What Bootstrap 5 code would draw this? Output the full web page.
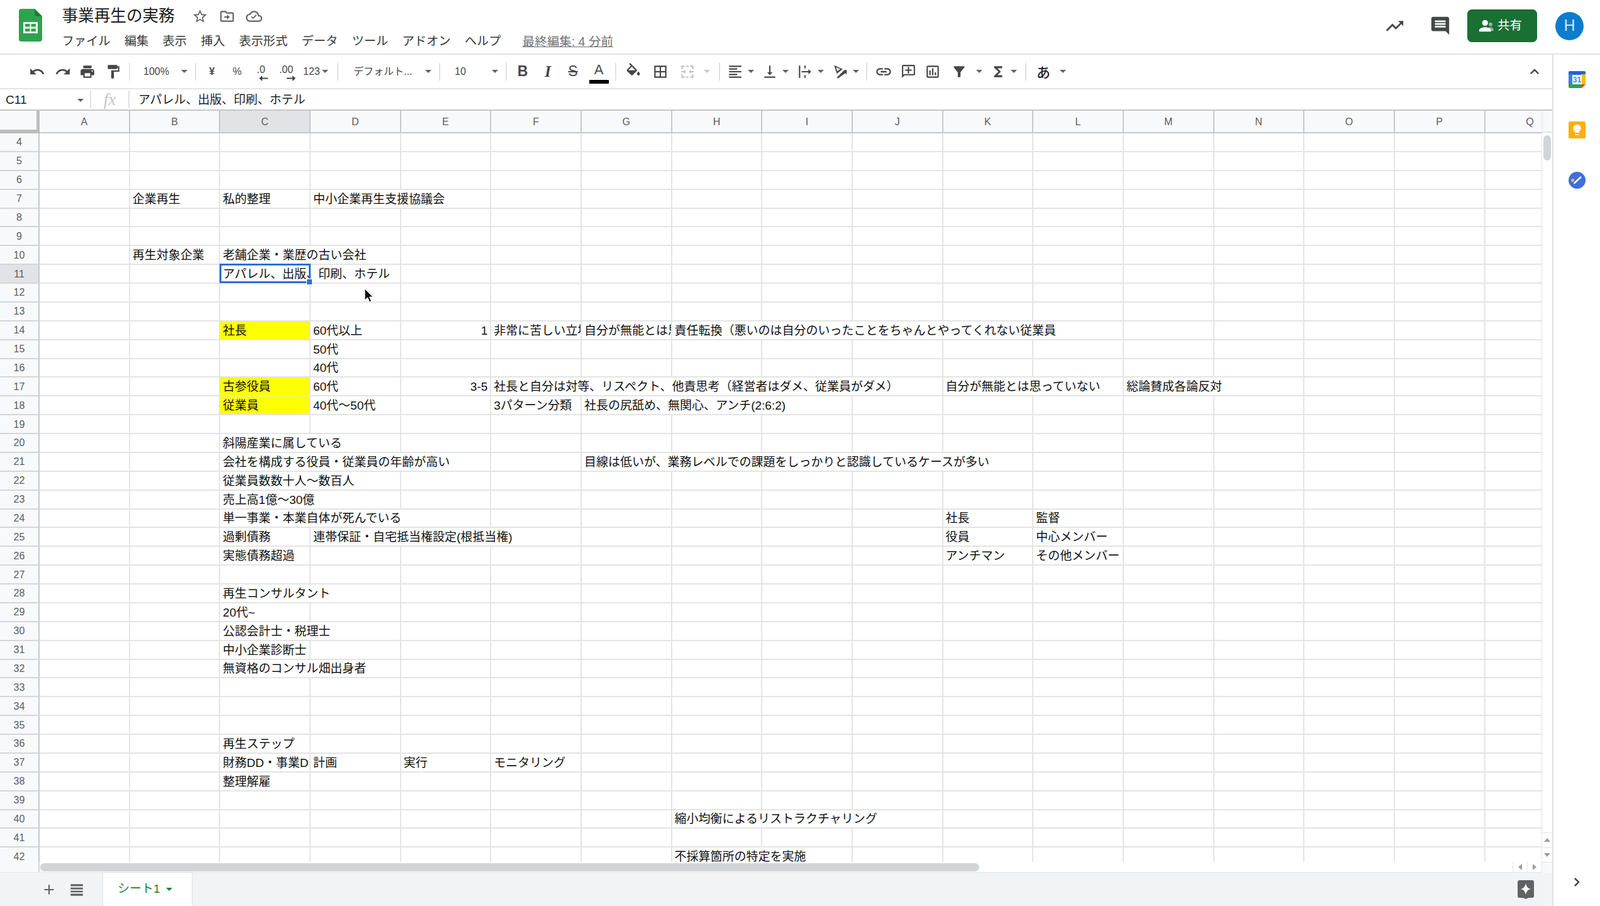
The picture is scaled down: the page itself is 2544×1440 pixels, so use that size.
<!DOCTYPE html>
<html lang="ja">
<head>
<meta charset="utf-8">
<title>事業再生の実務</title>
<link href="https://cdn.jsdelivr.net/npm/bootstrap@5.3.0/dist/css/bootstrap.min.css" rel="stylesheet">
<style>
html,body{height:100%}
body{font-family:"Liberation Sans","Noto Sans CJK JP",sans-serif;background:#fff;color:#000;position:relative;overflow:hidden}
.ic{fill:#444746;display:block;flex:none}
.ic-g{fill:#5f6368}
.ic-off{fill:#bfc1c4}
.carr{width:0;height:0;border-left:5px solid transparent;border-right:5px solid transparent;border-top:5.5px solid #5f6368;flex:none}
.carr-off{border-top-color:#c4c6c8}
/* header */
.appbar{height:87px;border-bottom:2px solid #e2e3e4;flex:none}
.logo-box{padding:14px 31.5px 0 30px;align-self:flex-start}
.doc-col{padding-top:3px}
.doc-title{font-size:25.6px;line-height:30px;color:#1b1b1b;margin:0;font-weight:400}
.doc-icons{gap:17px;margin-left:27.5px;padding-top:3px}
.menu-row{font-size:19.3px;line-height:26px;color:#36383b;gap:22.2px;margin-top:13px}
.last-edit{color:#6d7175;text-decoration:underline;margin-left:12px;font-size:19.5px}
.right-tools{padding-right:26px;margin-top:-3px}
.trend-slot{margin-right:39px}
.cmt-slot{margin-right:26.5px}
.sharebtn{--bs-btn-bg:#1a6f32;--bs-btn-border-color:#1a6f32;--bs-btn-color:#fff;--bs-btn-hover-bg:#1a6f32;--bs-btn-hover-color:#fff;width:111px;height:52px;border-radius:7px;padding:0 0 0 15px;font-size:19.5px;gap:4px}
.avatar{width:45px;height:45px;background:#0c7ccf;color:#cfe6f8;font-size:25px;margin-left:29px}
/* toolbar */
.tbgrid{display:grid;grid-template-columns:42px 40px 38px 44px 8px 97px 8px 44px 36px 40px 40px 58px 8px 154px 8px 94px 16px 36px 44px 36px 46px 8px 48px 38px 48px 14px 25px 55px 56px 56px 51px 8px 46px 32px 46px 38px 26px 34px 16px 22px 34px 28px 1fr;padding:0 14px 0 38px;height:55px;align-items:center;justify-items:center;border-bottom:2px solid #e2e3e4;flex:none;font-size:16px;color:#444746}
.tb-sep{width:2px;height:28px;background:#dfe1e3}
.tsel{justify-self:stretch;display:flex;align-items:center;justify-content:space-between}
.ts-zoom{padding:0 9px 0 18px}
.ts-font{padding:0 9px 0 21px}
.ts-size{padding:0 5px 0 20px}
.ts-num{padding-left:7px;justify-content:flex-start;gap:3px}
.pair{justify-self:stretch;display:flex;align-items:center;gap:7px}
.dec{display:flex;flex-direction:column;align-items:flex-end;line-height:18px;padding-top:3px}
.dec-a{margin-right:-4px}
.fmt-b{font-weight:700;font-size:23px}
.fmt-i{font-family:"Liberation Serif",serif;font-style:italic;font-size:26px;font-weight:700}
.fmt-s{font-size:23px;text-decoration:line-through}
.fmt-a{display:flex;flex-direction:column;align-items:center;font-size:22px;line-height:26px;padding-top:3px}
.fmt-bar{width:31px;height:6px;background:#000;margin-top:3px}
.kana{font-size:22px;color:#222;font-weight:500;font-family:"Noto Sans CJK JP",sans-serif}
.collapse-btn{justify-self:end}
.yen{font-weight:700}
/* formula */
.fbar{height:34px;border-bottom:2px solid #c5c6c8;flex:none;font-size:19px;color:#202124}
.namebox{width:143px;padding:2px 10px 0 9px}
.fb-sep{width:2px;height:28px;background:#e0e1e3;flex:none}
.fx-slot{width:59px;text-align:center;font-family:"Liberation Serif",serif;font-style:italic;font-size:27px;color:#c4c5c7;line-height:30px}
.fb-text{padding:2px 0 0 14px}
/* sheet table */
.gridarea{min-height:0}
.tablewrap{overflow:hidden;min-height:0}
.sheet-table.table{table-layout:fixed;width:2505.39px;border-collapse:separate;border-spacing:0;margin:0;font-size:19px;color:#111}
.sheet-table.table>:not(caption)>*>*{padding:2px 4px 0;border:0;box-shadow:none;height:29.88px;line-height:24px;white-space:nowrap;vertical-align:middle;border-right:2px solid #e3e4e4;border-bottom:2px solid #e3e4e4;background:#fff}
.sheet-table.table>thead>tr>th{height:36px;background:#f8f9fa;border-right:2px solid #c6c8ca;border-bottom:2px solid #c6c8ca;font-weight:400;font-size:16px;color:#5a5d61;text-align:center;padding:2px 0 0}
.sheet-table.table>thead>tr>th.corner{border-right:5px solid #bcbdbe;border-bottom:6px solid #bcbdbe}
.sheet-table.table>thead>tr>th.cur,.sheet-table.table>tbody>tr>th.cur{background:#e1e3e6}
.sheet-table.table>tbody>tr>th{background:#f8f9fa;border-right:2px solid #c6c8ca;border-bottom:2px solid #d4d6d8;font-weight:400;font-size:16px;color:#5a5d61;text-align:center;padding:1px 0 0}
.sheet-table.table>tbody>tr>td.cell-y{background:#ff0}
.sheet-table.table>tbody>tr>td.cell-c{overflow:hidden}
.sheet-table.table>tbody>tr>td.cell-r{text-align:right}
.sheet-table.table>tbody>tr>td.cell-s{position:relative}
.selbox{position:absolute;left:-1px;top:-2px;width:144.5px;height:31px;border:3px solid #2a6fd8;pointer-events:none}
.selhandle{position:absolute;right:-6px;bottom:-6px;width:10px;height:10px;background:#2a6fd8;border:1px solid #fff}
.col-rh{width:63px}
.col-c{width:143.67px}
/* scrollbars */
.hscroll{height:17px;flex:none;background:#fff;border-bottom:1px solid #e6e7e8}
.hs-head{width:63px;background:#f8f9fa;border-right:2px solid #d4d6d8;flex:none}
.hs-track{padding:2px 0 2px 1px;min-width:0}
.hs-thumb{width:1493px;height:13px;border-radius:7px;background:#d2d5d8}
.sb-btn{width:23px;border-left:1px solid #e2e3e4;flex:none}
.vscroll{width:17px;flex:none;background:#fff;border-left:1px solid #e3e4e4}
.vs-head{height:35px;background:#f8f9fa;border-bottom:2px solid #e3e4e4;flex:none}
.vs-track{padding:4px 2px 0 2px;min-height:0}
.vs-thumb{height:40px;border-radius:7px;background:#d2d5d8}
.vs-btn{height:23.5px;border-top:1px solid #e2e3e4;flex:none}
.vs-corner{height:17px;border-top:1px solid #e2e3e4;background:#f8f9fa;flex:none}
.tri{width:0;height:0;border:5px solid transparent}
.tri-u{border-bottom:6px solid #9a9ca0;border-top:0}
.tri-d{border-top:6px solid #9a9ca0;border-bottom:0}
.tri-l{border-right:6px solid #9a9ca0;border-left:0}
.tri-r{border-left:6px solid #9a9ca0;border-right:0}
/* footer */
.sheetbar{height:53px;background:#f1f3f4;flex:none;padding-left:65px;padding-right:29px}
.ham-slot{margin-left:18px;margin-right:29px}
.sheettab{width:141px;height:100%;background:#fff;color:#188038;font-size:19px;padding-left:23px;gap:9px;box-shadow:0 0 2px rgba(60,64,67,.25)}
.carr-green{border-top-color:#188038}
/* side */
.sidepanel{width:76px;flex:none;border-left:2px solid #e2e3e4;padding:26px 0 24px;gap:53px}
.cursorpin{position:absolute;left:579px;top:458px}
</style>
</head>
<body class="d-flex flex-column">

<header class="appbar d-flex align-items-center">
  <div class="logo-box">
    <svg width="37" height="52" viewBox="0 0 37 52"><path d="M4 0h21l12 12v36a4 4 0 0 1-4 4H4a4 4 0 0 1-4-4V4a4 4 0 0 1 4-4z" fill="#2fa24f"/><path d="M25 0l12 12H28a3 3 0 0 1-3-3z" fill="#188038"/><path d="M7 21h23v18H7z" fill="#f1f8f3"/><path d="M10 24h7.5v4.5H10zM19.5 24H27v4.5h-7.5zM10 31.5h7.5V36H10zM19.5 31.5H27V36h-7.5z" fill="#2fa24f"/></svg>
  </div>
  <div class="doc-col">
    <div class="d-flex align-items-center">
      <h1 class="doc-title">事業再生の実務</h1>
      <div class="doc-icons d-flex align-items-center">
        <svg class="ic ic-g" width="26" height="26" viewBox="0 0 24 24"><path d="M22 9.24l-7.19-.62L12 2 9.19 8.63 2 9.24l5.46 4.73L5.82 21 12 17.27 18.18 21l-1.63-7.03L22 9.24zM12 15.4l-3.76 2.27 1-4.28-3.32-2.88 4.38-.38L12 6.1l1.71 4.04 4.38.38-3.32 2.88 1 4.28L12 15.4z"/></svg>
        <svg class="ic ic-g" width="26" height="26" viewBox="0 0 24 24"><path d="M20 6h-8l-2-2H4c-1.1 0-2 .9-2 2v12c0 1.1.9 2 2 2h16c1.1 0 2-.9 2-2V8c0-1.1-.9-2-2-2zm0 12H4V6h5.17l2 2H20v10z"/><path d="M12 9.5l4 3.5-4 3.500V14H8v-2h4z"/></svg>
        <svg class="ic ic-g" width="26" height="26" viewBox="0 0 24 24"><path d="M19.35 10.04C18.67 6.59 15.64 4 12 4 9.11 4 6.6 5.64 5.35 8.04 2.34 8.36 0 10.91 0 14c0 3.31 2.69 6 6 6h13c2.76 0 5-2.24 5-5 0-2.64-2.05-4.78-4.65-4.96zM19 18H6c-2.21 0-4-1.790-4-4s1.790-4 4-4h.71C7.37 7.690 9.480 6 12 6c3.040 0 5.500 2.460 5.500 5.500v.5H19c1.660 0 3 1.340 3 3s-1.340 3-3 3z"/><path d="M10.500 16L7.500 13l1.200-1.200 1.800 1.800 4.300-4.300 1.200 1.200z"/></svg>
      </div>
    </div>
    <nav class="menu-row d-flex align-items-center">
      <span>ファイル</span><span>編集</span><span>表示</span><span>挿入</span><span>表示形式</span><span>データ</span><span>ツール</span><span>アドオン</span><span>ヘルプ</span><span class="last-edit">最終編集: 4 分前</span>
    </nav>
  </div>
  <div class="right-tools ms-auto d-flex align-items-center">
    <div class="trend-slot"><svg class="ic" width="33" height="33" viewBox="0 0 24 24"><path d="M16 6l2.290 2.290-4.880 4.880-4-4L2 16.590 3.410 18l6-6 4 4 6.300-6.290L22 12V6z"/></svg></div>
    <div class="cmt-slot"><svg class="ic" width="34" height="34" viewBox="0 0 24 24"><path d="M21.990 4c0-1.100-.89-2-1.990-2H4c-1.100 0-2 .9-2 2v12c0 1.100.9 2 2 2h14l4 4-.01-18zM18 14H6v-2h12v2zm0-3H6V9h12v2zm0-3H6V6h12v2z"/></svg></div>
    <button class="btn sharebtn d-flex align-items-center" type="button">
      <svg width="28" height="28" viewBox="0 0 24 24"><path d="M18 12.500a2.500 2.500 0 1 0 0-5 2.500 2.500 0 0 0 0 5zm0 1.500c-1.700 0-5 .9-5 2.600V19h9v-2.400c0-1.700-3.300-2.600-4-2.600z" fill="#8fb79a"/><path d="M10.500 12a4 4 0 1 0 0-8 4 4 0 0 0 0 8zm0 2c-2.670 0-8 1.340-8 4v2h16v-2c0-2.660-5.330-4-8-4z" fill="#fff"/></svg>
      <span>共有</span>
    </button>
    <div class="avatar rounded-circle d-flex align-items-center justify-content-center">H</div>
  </div>
</header>

<div class="d-flex flex-grow-1" style="min-height:0">
  <main class="d-flex flex-column flex-grow-1" style="min-width:0">
    <div class="tbgrid">
      <svg class="ic" width="26" height="26" viewBox="0 0 24 24"><path d="M12.500 8c-2.650 0-5.050.99-6.900 2.600L2 7v9h9l-3.620-3.620c1.390-1.160 3.160-1.880 5.120-1.880 3.540 0 6.550 2.310 7.600 5.500l2.370-.78C21.080 11.030 17.150 8 12.500 8z"/></svg>
      <svg class="ic" width="26" height="26" viewBox="0 0 24 24"><path d="M18.400 10.600C16.550 8.990 14.150 8 11.500 8c-4.650 0-8.580 3.030-9.960 7.220L3.900 16c1.050-3.190 4.050-5.500 7.600-5.500 1.950 0 3.730.72 5.120 1.880L13 16h9V7l-3.600 3.600z"/></svg>
      <svg class="ic" width="26" height="26" viewBox="0 0 24 24"><path d="M19 8H5c-1.660 0-3 1.340-3 3v6h4v4h12v-4h4v-6c0-1.660-1.340-3-3-3zm-3 11H8v-5h8v5zm3-7c-.55 0-1-.45-1-1s.45-1 1-1 1 .45 1 1-.45 1-1 1zm-1-9H6v4h12V3z"/></svg>
      <svg class="ic" width="26" height="26" viewBox="0 0 24 24"><path d="M18 4V3c0-.55-.45-1-1-1H5c-.55 0-1 .45-1 1v4c0 .55.45 1 1 1h12c.55 0 1-.45 1-1V6h1v4H9v11c0 .55.45 1 1 1h2c.55 0 1-.45 1-1v-9h8V4h-3z"/></svg>
      <i class="tb-sep"></i>
      <div class="tsel ts-zoom"><span>100%</span><i class="carr"></i></div>
      <i class="tb-sep"></i>
      <span class="yen">¥</span>
      <span>%</span>
      <div class="dec"><span>.0</span><svg class="dec-a" width="14" height="9" viewBox="0 0 14 9"><path d="M5 0v3.500h9v2H5V9L0 4.500z" fill="#444746"/></svg></div>
      <div class="dec"><span>.00</span><svg class="dec-a" width="14" height="9" viewBox="0 0 14 9"><path d="M9 0v3.500H0v2h9V9l5-4.500z" fill="#444746"/></svg></div>
      <div class="tsel ts-num"><span>123</span><i class="carr"></i></div>
      <i class="tb-sep"></i>
      <div class="tsel ts-font"><span>デフォルト...</span><i class="carr"></i></div>
      <i class="tb-sep"></i>
      <div class="tsel ts-size"><span>10</span><i class="carr"></i></div>
      <i class="tb-sep"></i>
      <span class="fmt-b">B</span>
      <span class="fmt-i">I</span>
      <span class="fmt-s">S</span>
      <div class="fmt-a"><span>A</span><i class="fmt-bar"></i></div>
      <i class="tb-sep"></i>
      <svg class="ic" width="28" height="28" viewBox="0 0 24 24"><path fill-rule="evenodd" d="M16.560 8.940L7.620 0 6.210 1.410l2.380 2.380-5.150 5.150c-.59.59-.59 1.540 0 2.120l5.500 5.500c.29.29.68.44 1.060.44s.77-.15 1.060-.44l5.500-5.500c.59-.58.59-1.530 0-2.120zM5.210 10L10 5.210 14.790 10H5.210z"/><path d="M19 11.500s-2 2.170-2 3.500c0 1.100.9 2 2 2s2-.9 2-2c0-1.330-2-3.500-2-3.500z"/></svg>
      <svg class="ic" width="26" height="26" viewBox="0 0 24 24"><path d="M3 3v18h18V3H3zm8 16H5v-6h6v6zm0-8H5V5h6v6zm8 8h-6v-6h6v6zm0-8h-6V5h6v6z"/></svg>
      <svg class="ic ic-off" width="26" height="26" viewBox="0 0 24 24"><path d="M3 3h5v2H5v3H3zM16 3h5v5h-2V5h-3zM3 16h2v3h3v2H3zM19 16h2v5h-5v-2h3zM10.500 3h3v2h-3zM10.500 19h3v2h-3zM3 11h4V9l3 3-3 3v-2H3zM21 11h-4V9l-3 3 3 3v-2h4z"/></svg>
      <i class="carr carr-off"></i>
      <i class="tb-sep"></i>
      <div class="pair"><svg class="ic" width="26" height="26" viewBox="0 0 24 24"><path d="M15 15H3v2h12v-2zm0-8H3v2h12V7zM3 13h18v-2H3v2zm0 8h18v-2H3v2zM3 3v2h18V3H3z"/></svg><i class="carr"></i></div>
      <div class="pair"><svg class="ic" width="26" height="26" viewBox="0 0 24 24"><path d="M16 13h-3V3h-2v10H8l4 4 4-4zM4 19v2h16v-2H4z"/></svg><i class="carr"></i></div>
      <div class="pair"><svg class="ic" width="26" height="26" viewBox="0 0 24 24"><path d="M3 3h2v18H3zM11 3h2v4h-2zM11 17h2v4h-2zM7 11h10V8l4 4-4 4v-3H7z"/></svg><i class="carr"></i></div>
      <div class="pair"><svg class="ic" width="26" height="26" viewBox="0 0 24 24"><path fill-rule="evenodd" d="M3 2.500L15.500 8 7 15zM6 5.800l1.600 5.600 4.400-3.600z"/><path d="M7 20.500L18 9.500l-3-.0h6.500V16l-2-2L8.500 22z"/></svg><i class="carr"></i></div>
      <i class="tb-sep"></i>
      <svg class="ic" width="28" height="28" viewBox="0 0 24 24"><path d="M3.900 12c0-1.710 1.390-3.100 3.100-3.100h4V7H7c-2.760 0-5 2.240-5 5s2.240 5 5 5h4v-1.900H7c-1.710 0-3.100-1.390-3.100-3.100zM8 13h8v-2H8v2zm9-6h-4v1.900h4c1.710 0 3.100 1.390 3.100 3.100s-1.390 3.100-3.100 3.100h-4V17h4c2.760 0 5-2.240 5-5s-2.240-5-5-5z"/></svg>
      <svg class="ic" width="25" height="25" viewBox="0 0 24 24"><path d="M22 4c0-1.100-.9-2-2-2H4c-1.100 0-2 .9-2 2v12c0 1.100.9 2 2 2h14l4 4V4zM2 22zm18-4.830L18.830 16H4V4h16v13.170zM13 5h-2v4H7v2h4v4h2v-4h4V9h-4z" transform="matrix(-1 0 0 1 24 0)"/></svg>
      <svg class="ic" width="26" height="26" viewBox="0 0 24 24"><path d="M9 17H7v-7h2v7zm4 0h-2V7h2v10zm4 0h-2v-4h2v4zm2 2H5V5h14v14zm0-16H5c-1.100 0-2 .9-2 2v14c0 1.100.9 2 2 2h14c1.100 0 2-.9 2-2V5c0-1.100-.9-2-2-2z"/></svg>
      <svg class="ic" width="26" height="26" viewBox="0 0 24 24"><path d="M4.250 5.610C6.270 8.200 10 13 10 13v6c0 .55.45 1 1 1h2c.55 0 1-.45 1-1v-6s3.720-4.800 5.740-7.390c.51-.66.04-1.610-.79-1.610H5.040c-.83 0-1.300.95-.79 1.610z"/></svg>
      <i class="carr"></i>
      <svg class="ic" width="26" height="26" viewBox="0 0 24 24"><path d="M18 4H6v2l6.500 6L6 18v2h12v-3h-7l5-5-5-5h7z"/></svg>
      <i class="carr"></i>
      <i class="tb-sep"></i>
      <span class="kana">あ</span>
      <i class="carr"></i>
      <svg class="ic collapse-btn" width="28" height="28" viewBox="0 0 24 24"><path d="M7.410 15.410L12 10.830l4.590 4.580L18 14l-6-6-6 6z"/></svg>
    </div>

    <div class="fbar d-flex align-items-center">
      <div class="namebox d-flex align-items-center justify-content-between"><span>C11</span><i class="carr"></i></div>
      <i class="fb-sep"></i>
      <div class="fx-slot">fx</div>
      <i class="fb-sep"></i>
      <div class="fb-text">アパレル、出版、印刷、ホテル</div>
    </div>

    <div class="gridarea d-flex flex-grow-1">
      <div class="d-flex flex-column flex-grow-1" style="min-width:0">
        <div class="tablewrap flex-grow-1">
          <table class="table sheet-table">
            <colgroup id="cols"></colgroup>
            <thead><tr id="colhead"></tr></thead>
            <tbody id="sheetbody"></tbody>
          </table>
        </div>
        <div class="hscroll d-flex">
          <div class="hs-head"></div>
          <div class="hs-track flex-grow-1"><div class="hs-thumb"></div></div>
          <div class="sb-btn d-flex align-items-center justify-content-center"><i class="tri tri-l"></i></div>
          <div class="sb-btn d-flex align-items-center justify-content-center"><i class="tri tri-r"></i></div>
        </div>
      </div>
      <div class="vscroll d-flex flex-column">
        <div class="vs-head"></div>
        <div class="vs-track flex-grow-1"><div class="vs-thumb"></div></div>
        <div class="vs-btn d-flex align-items-center justify-content-center"><i class="tri tri-u"></i></div>
        <div class="vs-btn d-flex align-items-center justify-content-center"><i class="tri tri-d"></i></div>
        <div class="vs-corner"></div>
      </div>
    </div>

    <footer class="sheetbar d-flex align-items-center">
      <svg class="ic ic-g" width="26" height="26" viewBox="0 0 24 24"><path d="M19 13h-6v6h-2v-6H5v-2h6V5h2v6h6v2z"/></svg>
      <div class="ham-slot"><svg class="ic ic-g" width="26" height="26" viewBox="0 0 24 24"><path d="M3 4h18v3H3zM3 9h18v2.500H3zM3 13.500h18V16H3zM3 18h18v3H3z"/></svg></div>
      <div class="sheettab d-flex align-items-center"><span>シート1</span><i class="carr carr-green"></i></div>
      <div class="ms-auto"><svg width="26" height="30" viewBox="0 0 26 30"><path d="M3 0h20a3 3 0 0 1 3 3v22a3 3 0 0 1-3 3h-6l-4 2-4-2H3a3 3 0 0 1-3-3V3a3 3 0 0 1 3-3z" fill="#5f6368"/><path d="M13 5c1 5 3 8 8 9-5 1-7 4-8 9-1-5-3-8-8-9 5-1 7-4 8-9z" fill="#fff"/></svg></div>
    </footer>
  </main>

  <aside class="sidepanel d-flex flex-column align-items-center">
    <svg width="27" height="27" viewBox="0 0 27 27"><path d="M2 0h23a2 2 0 0 1 2 2v5H0V2a2 2 0 0 1 2-2z" fill="#1f66d0"/><path d="M0 5h7v17H0z" fill="#3b7df0"/><path d="M0 20h21v7H2a2 2 0 0 1-2-2z" fill="#2fa24f"/><path d="M20 5h7v16h-7z" fill="#fbbc04"/><path d="M21 21h6l-6 6z" fill="#e3421f"/><path d="M6 6h15v15H6z" fill="#fff"/><text x="13.500" y="18" text-anchor="middle" font-family="Liberation Sans" font-size="12" font-weight="700" fill="#4285f4">31</text></svg>
    <svg width="27" height="27" viewBox="0 0 27 27"><rect width="27" height="27" rx="2.500" fill="#fbb005"/><path d="M13.500 5a6 6 0 0 1 3.500 10.900V18h-7v-2.100A6 6 0 0 1 13.500 5z" fill="#fff"/><path d="M10.500 20h6v1.500h-6z" fill="#fff"/></svg>
    <svg width="27" height="27" viewBox="0 0 27 27"><circle cx="13.500" cy="13.500" r="13.500" fill="#3e6fe0"/><path d="M9.500 19.500l-1.800-1.800L19 7l2 2z" fill="#fff"/><circle cx="6.500" cy="13.500" r="2.600" fill="#fbbc04"/></svg>
    <svg class="ic mt-auto" width="28" height="28" viewBox="0 0 24 24" style="fill:#3c4043"><path d="M10 6L8.590 7.410 13.170 12l-4.580 4.590L10 18l6-6z"/></svg>
  </aside>
</div>

<svg class="cursorpin" width="16" height="24" viewBox="0 0 16 24"><path d="M1 1v18l4.500-4 3 7 3-1.300-3-6.700H14z" fill="#111" stroke="#fff" stroke-width="1"/></svg>

<script>
var L='ABCDEFGHIJKLMNOPQ'.split('');
var D={
7:[[1,'企業再生'],[2,'私的整理'],[3,'中小企業再生支援協議会',2]],
10:[[1,'再生対象企業'],[2,'老舗企業・業歴の古い会社',2]],
11:[[2,'アパレル、出版、印刷、ホテル',2,'s']],
14:[[2,'社長',1,'y'],[3,'60代以上'],[4,'1',1,'r'],[5,'非常に苦しい立場',1,'c'],[6,'自分が無能とは思っている',1,'c'],[7,'責任転換（悪いのは自分のいったことをちゃんとやってくれない従業員',5]],
15:[[3,'50代']],
16:[[3,'40代']],
17:[[2,'古参役員',1,'y'],[3,'60代'],[4,'3-5',1,'r'],[5,'社長と自分は対等、リスペクト、他責思考（経営者はダメ、従業員がダメ）',5],[10,'自分が無能とは思っていない',2],[12,'総論賛成各論反対',2]],
18:[[2,'従業員',1,'y'],[3,'40代〜50代'],[5,'3パターン分類'],[6,'社長の尻舐め、無関心、アンチ(2:6:2)',3]],
20:[[2,'斜陽産業に属している',2]],
21:[[2,'会社を構成する役員・従業員の年齢が高い',3],[6,'目線は低いが、業務レベルでの課題をしっかりと認識しているケースが多い',5]],
22:[[2,'従業員数数十人〜数百人',2]],
23:[[2,'売上高1億〜30億',2]],
24:[[2,'単一事業・本業自体が死んでいる',3],[10,'社長'],[11,'監督']],
25:[[2,'過剰債務'],[3,'連帯保証・自宅抵当権設定(根抵当権)',3],[10,'役員'],[11,'中心メンバー']],
26:[[2,'実態債務超過'],[10,'アンチマン'],[11,'その他メンバー']],
28:[[2,'再生コンサルタント',2]],
29:[[2,'20代~']],
30:[[2,'公認会計士・税理士',2]],
31:[[2,'中小企業診断士']],
32:[[2,'無資格のコンサル畑出身者',2]],
36:[[2,'再生ステップ']],
37:[[2,'財務DD・事業DD',1,'c'],[3,'計画'],[4,'実行'],[5,'モニタリング']],
38:[[2,'整理解雇']],
40:[[7,'縮小均衡によるリストラクチャリング',3]],
42:[[7,'不採算箇所の特定を実施',2]]
};
var cols='<col class="col-rh">',head='<th class="corner"></th>';
L.forEach(function(c,i){cols+='<col class="col-c">';head+='<th'+(i===2?' class="cur"':'')+'>'+c+'</th>';});
document.getElementById('cols').innerHTML=cols;
document.getElementById('colhead').innerHTML=head;
var html='';
for(var r=4;r<=42;r++){
  html+='<tr><th'+(r===11?' class="cur"':'')+'>'+r+'</th>';
  var cells=D[r]||[];
  for(var i=0;i<17;i++){
    var e=cells.filter(function(x){return x[0]===i;})[0];
    if(!e){html+='<td></td>';continue;}
    var sp=e[2]||1,k=e[3];
    html+='<td'+(sp>1?' colspan="'+sp+'"':'')+(k?' class="cell-'+k+'"':'')+'>'+e[1];
    if(k==='s')html+='<div class="selbox"><div class="selhandle"></div></div>';
    html+='</td>';
    i+=sp-1;
  }
  html+='</tr>';
}
document.getElementById('sheetbody').innerHTML=html;
</script>
<script src="https://cdn.jsdelivr.net/npm/bootstrap@5.3.0/dist/js/bootstrap.bundle.min.js"></script>
</body>
</html>
